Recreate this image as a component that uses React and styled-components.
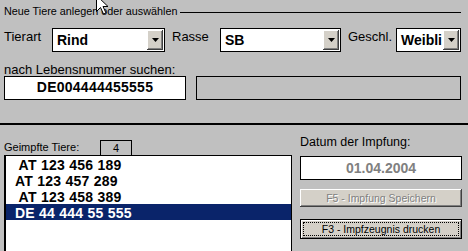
import React from "react";
import styled, { createGlobalStyle } from "styled-components";

const GlobalStyle = createGlobalStyle`
  html, body {
    margin: 0;
    padding: 0;
    background: #c0c0c0;
  }
  body {
    font-family: "Liberation Sans", Arial, sans-serif;
  }
`;

const Window = styled.div`
  position: relative;
  width: 468px;
  height: 251px;
  overflow: hidden;
  background: #c0c0c0;
  color: #000;
`;

const TopPanel = styled.div`
  padding: 5px 7px 0 4px;
`;

const GroupHeader = styled.div`
  display: flex;
  height: 12px;
  font-size: 10.8px;
  line-height: 12px;
`;

const GroupTitle = styled.span`
  white-space: nowrap;
`;

const GroupRule = styled.div`
  flex: 1;
  height: 1px;
  margin: 7px 0 0 3px;
  background: #000;
`;

const FieldRow = styled.div`
  display: flex;
  align-items: flex-start;
  height: 24px;
  margin-top: 11px;
`;

const FieldLabel = styled.span`
  width: 48px;
  margin-left: ${(p) => (p.$first ? 0 : 7)}px;
  padding-top: 1px;
  font-size: 13px;
  line-height: 15px;
`;

const Combo = styled.div`
  display: flex;
  width: ${(p) => p.$width}px;
  height: 24px;
  box-sizing: border-box;
  padding: 1px;
  border: 1px solid #000;
  background: #fff;
`;

const ComboValue = styled.div`
  flex: 1;
  overflow: hidden;
  white-space: nowrap;
  padding-left: 3px;
  font-size: 14px;
  font-weight: bold;
  line-height: 20px;
`;

const ComboButton = styled.div`
  display: flex;
  align-items: center;
  justify-content: center;
  width: 16px;
  height: 20px;
  background: #d4d0c8;
  box-shadow: inset -1px -1px #404040, inset 1px 1px #fff,
    inset -2px -2px #808080;
`;

const SearchLabel = styled.div`
  margin-top: 11px;
  font-size: 13px;
  line-height: 13px;
`;

const SearchRow = styled.div`
  display: flex;
  gap: 10px;
  height: 24px;
`;

const SearchInput = styled.div`
  width: 182px;
  box-sizing: border-box;
  border: 1px solid #000;
  background: #fff;
  text-align: center;
  font-size: 14px;
  font-weight: bold;
  letter-spacing: 0.25px;
  line-height: 20px;
`;

const InfoField = styled.div`
  flex: 1;
  box-sizing: border-box;
  border: 1px solid #000;
`;

const Separator = styled.div`
  height: 2px;
  margin-top: 23px;
  background: #000;
`;

const BottomPanel = styled.div`
  display: flex;
  gap: 8px;
  padding: 0 6px 0 4px;
`;

const LeftColumn = styled.div`
  display: flex;
  flex-direction: column;
  width: 288px;
`;

const ListHeader = styled.div`
  display: flex;
  align-items: flex-start;
  height: 16px;
  margin: 15px 0 -1px;
`;

const ListTitle = styled.span`
  width: 96px;
  margin-top: 1px;
  font-size: 11px;
  line-height: 13px;
`;

const CountBox = styled.div`
  width: 32px;
  height: 16px;
  box-sizing: border-box;
  border: 1px solid #000;
  text-align: center;
  font-size: 11px;
  line-height: 14px;
`;

const ListBox = styled.div`
  height: 120px;
  border: 1px solid #000;
  border-left-width: 2px;
  background: #fff;
`;

const ListItem = styled.div`
  height: 16px;
  padding-left: 9px;
  white-space: pre;
  font-size: 14px;
  font-weight: bold;
  letter-spacing: 0.25px;
  line-height: 19px;
  background: ${(p) => (p.$selected ? "#0a246a" : "transparent")};
  color: ${(p) => (p.$selected ? "#fff" : "#000")};
`;

const RightColumn = styled.div`
  display: flex;
  flex-direction: column;
  width: 162px;
`;

const DateLabel = styled.div`
  margin-top: 10px;
  font-size: 12.5px;
  line-height: 14px;
`;

const DateBox = styled.div`
  height: 24px;
  box-sizing: border-box;
  margin-top: 7px;
  border: 1px solid #000;
  background: #fff;
  text-align: center;
  font-size: 14px;
  font-weight: bold;
  line-height: 22px;
  color: #808080;
`;

const Button = styled.button`
  display: flex;
  align-items: stretch;
  justify-content: center;
  height: ${(p) => p.$height}px;
  box-sizing: border-box;
  margin: ${(p) => p.$top}px 0 0;
  padding: ${(p) => (p.$default ? "2px" : "0")};
  border: ${(p) => (p.$default ? "1px solid #000" : "none")};
  background: #d4d0c8;
  box-shadow: ${(p) =>
    p.$default
      ? "inset 1px 1px #fff, inset -1px -1px #808080"
      : "inset -1px -1px #404040, inset 1px 1px #fff, inset -2px -2px #808080"};
  font-family: inherit;
  font-size: 10.5px;
  color: ${(p) => (p.disabled ? "#808080" : "#000")};
  text-shadow: ${(p) => (p.disabled ? "1px 1px #fff" : "none")};
`;

const ButtonLabel = styled.span`
  display: flex;
  flex: 1;
  align-items: center;
  justify-content: center;
  border: 1px dotted ${(p) => (p.$focused ? "#000" : "transparent")};
`;

const Cursor = styled.svg`
  position: absolute;
  left: 96px;
  top: -5px;
`;

function DropArrow() {
  return (
    <svg width="7" height="4" viewBox="0 0 7 4">
      <path d="M0 0h7L3.5 4z" fill="#000" />
    </svg>
  );
}

function ComboBox({ width, value }) {
  return (
    <Combo $width={width}>
      <ComboValue>{value}</ComboValue>
      <ComboButton>
        <DropArrow />
      </ComboButton>
    </Combo>
  );
}

const animals = [
  " AT 123 456 189",
  "AT 123 457 289",
  " AT 123 458 389",
  "DE 44 444 55 555",
];

export default function App() {
  return (
    <Window>
      <GlobalStyle />
      <TopPanel>
        <GroupHeader>
          <GroupTitle>Neue Tiere anlegen oder auswählen</GroupTitle>
          <GroupRule />
        </GroupHeader>
        <FieldRow>
          <FieldLabel $first>Tierart</FieldLabel>
          <ComboBox width={113} value="Rind" />
          <FieldLabel>Rasse</FieldLabel>
          <ComboBox width={121} value="SB" />
          <FieldLabel>Geschl.</FieldLabel>
          <ComboBox width={65} value="Weibli" />
        </FieldRow>
        <SearchLabel>nach Lebensnummer suchen:</SearchLabel>
        <SearchRow>
          <SearchInput>DE004444455555</SearchInput>
          <InfoField />
        </SearchRow>
      </TopPanel>
      <Separator />
      <BottomPanel>
        <LeftColumn>
          <ListHeader>
            <ListTitle>Geimpfte Tiere:</ListTitle>
            <CountBox>4</CountBox>
          </ListHeader>
          <ListBox>
            {animals.map((a, i) => (
              <ListItem key={a} $selected={i === animals.length - 1}>
                {a}
              </ListItem>
            ))}
          </ListBox>
        </LeftColumn>
        <RightColumn>
          <DateLabel>Datum der Impfung:</DateLabel>
          <DateBox>01.04.2004</DateBox>
          <Button $height={18} $top={9} disabled>
            <ButtonLabel>F5 - Impfung Speichern</ButtonLabel>
          </Button>
          <Button $height={20} $top={12} $default>
            <ButtonLabel $focused>F3 - Impfzeugnis drucken</ButtonLabel>
          </Button>
        </RightColumn>
      </BottomPanel>
      <Cursor width="13" height="20" viewBox="-0.5 -0.5 13 20">
        <path
          d="M0 0L0 16L4 12L7 18.5L9.5 17.5L6.5 11L11.5 11Z"
          fill="#fff"
          stroke="#000"
          strokeWidth="1"
          strokeLinejoin="miter"
        />
      </Cursor>
    </Window>
  );
}
